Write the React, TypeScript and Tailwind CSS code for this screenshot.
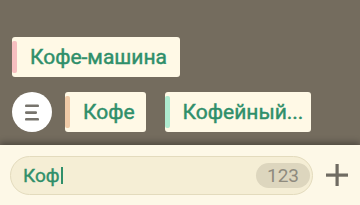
import React from 'react';

type Chip = { label: string; accent: string; pad?: string };

const Tag: React.FC<Chip> = ({ label, accent, pad = 'pr-[13px]' }) => (
  <div className={`flex h-10 items-center rounded-[3px] bg-[#fff9e6] ${pad}`}>
    <span className={`h-8 w-[5px] rounded-[2px] ${accent}`} />
    <span className="ml-[13px] whitespace-nowrap text-[21px] font-normal leading-none text-[#2f8f6a] [-webkit-text-stroke:0.45px_#2f8f6a]">
      {label}
    </span>
  </div>
);

const MenuButton: React.FC = () => (
  <button className="flex h-10 w-10 items-center justify-center rounded-full bg-white">
    <svg className="mr-[1px]" width="14" height="17" viewBox="0 0 14 17">
      <rect x="0" y="0.5" width="14" height="2.6" rx="1.2" fill="#77746d" />
      <rect x="0" y="7.3" width="12" height="2.6" rx="1.2" fill="#77746d" />
      <rect x="0" y="14" width="14" height="2.6" rx="1.2" fill="#77746d" />
    </svg>
  </button>
);

export default function App() {
  return (
    <div
      className="flex h-[205px] w-[360px] flex-col overflow-hidden bg-[#746c5e]"
      style={{ fontFamily: 'Roboto, "Noto Sans", sans-serif' }}
    >
      {/* Suggestions */}
      <div className="flex flex-1 flex-col justify-end gap-[15px] px-3 pb-[13px]">
        <div className="flex">
          <Tag label="Кофе-машина" accent="bg-[#f7bfc0]" />
        </div>
        <div className="flex items-center gap-[13px]">
          <MenuButton />
          <div className="flex gap-[19px]">
            <Tag label="Кофе" accent="bg-[#efcaa7]" pad="pr-[11px]" />
            <Tag label="Кофейный..." accent="bg-[#aeeacf]" pad="pr-[8px]" />
          </div>
        </div>
      </div>

      {/* Input bar */}
      <div className="flex h-[60px] items-center bg-[#fdf8e7] pl-[10px] pr-3 shadow-[0_-3px_6px_rgba(0,0,0,0.3)]">
        <div className="flex h-[39px] w-[303px] items-center rounded-full border border-[#e3dbbd] bg-[#f5eed5] pl-3 pr-[2px]">
          <span className="text-[19px] font-normal leading-none text-[#2f8f6a] [-webkit-text-stroke:0.4px_#2f8f6a]">Коф</span>
          <span className="ml-[1px] h-[17px] w-[2px] bg-[#2f8f6a]" />
          <span className="flex-1" />
          <span className="flex h-[25px] w-[54px] items-center justify-center rounded-full bg-[#ddd6be] text-[19px] leading-none text-[#8f8b7e]">
            123
          </span>
        </div>
        <svg className="ml-[13px]" width="22" height="22" viewBox="0 0 22 22">
          <rect x="9.5" y="0" width="3.2" height="22" fill="#6f6b62" />
          <rect x="0" y="9.5" width="22" height="3.2" fill="#6f6b62" />
        </svg>
      </div>
    </div>
  );
}
